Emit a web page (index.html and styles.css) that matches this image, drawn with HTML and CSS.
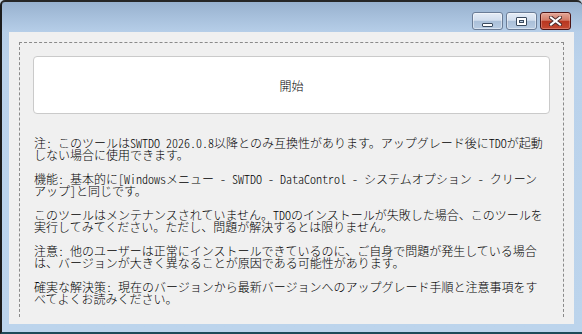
FILE: index.html
```html
<!DOCTYPE html>
<html lang="ja">
<head>
<meta charset="utf-8">
<link rel="stylesheet" href="styles.css">
</head>
<body>
<div class="window">
  <div class="titlebar">
    <div class="caption-btn cb-min"><span class="g-min"></span></div>
    <div class="caption-btn cb-max"><span class="g-max"></span></div>
    <div class="caption-btn cb-close">
      <svg width="13" height="10" viewBox="0 0 13 10">
        <path d="M2 1.5 L11 8.5 M11 1.5 L2 8.5" stroke="#4a2a2a" stroke-width="4" stroke-linecap="square" fill="none"/>
        <path d="M2 1.5 L11 8.5 M11 1.5 L2 8.5" stroke="#ffffff" stroke-width="2" stroke-linecap="square" fill="none"/>
      </svg>
    </div>
  </div>
  <div class="client">
    <div class="panel">
      <div class="start-btn">開始</div>
      <div class="notes">
        <p>注: このツールはSWTDO 2026.0.8以降とのみ互換性があります。アップグレード後にTDOが起動しない場合に使用できます。</p>
        <p>機能: 基本的に[Windowsメニュー - SWTDO - DataControl - システムオプション - クリーンアップ]と同じです。</p>
        <p>このツールはメンテナンスされていません。TDOのインストールが失敗した場合、このツールを実行してみてください。ただし、問題が解決するとは限りません。</p>
        <p>注意: 他のユーザーは正常にインストールできているのに、ご自身で問題が発生している場合は、バージョンが大きく異なることが原因である可能性があります。</p>
        <p>確実な解決策: 現在のバージョンから最新バージョンへのアップグレード手順と注意事項をすべてよくお読みください。</p>
      </div>
    </div>
  </div>
</div>
</body>
</html>
```

FILE: styles.css
```css
html, body {
  margin: 0;
  padding: 0;
}
body {
  width: 582px;
  height: 334px;
  overflow: hidden;
  background: #c9d6e2;
  font-family: "Noto Sans CJK JP", sans-serif;
}
.window {
  box-sizing: border-box;
  width: 582px;
  height: 334px;
  display: flex;
  flex-direction: column;
  border-left: 2px solid #1c1c1c;
  border-top: 2px solid #262626;
  border-bottom: 2px solid #1d4a58;
  border-top-left-radius: 5px;
  border-top-right-radius: 5px;
  background: linear-gradient(to bottom, #98b1ce 0px, #a6bfdb 14px, #b6cee8 30px, #bad2eb 60px, #bcd4ec 100%);
}
.titlebar {
  box-sizing: border-box;
  height: 30px;
  flex: none;
  display: flex;
  justify-content: flex-end;
  align-items: flex-start;
  gap: 3px;
  padding-top: 10px;
  padding-right: 11px;
}
.caption-btn {
  box-sizing: border-box;
  width: 31px;
  height: 18px;
  border: 1px solid #6a7c96;
  border-radius: 3px;
  display: flex;
  align-items: center;
  justify-content: center;
  background: linear-gradient(to bottom, #e4ecf6 0%, #d2deee 46%, #aabfd8 50%, #b8cce3 100%);
  box-shadow: inset 0 0 0 1px rgba(255, 255, 255, 0.45);
}
.cb-min {
  align-items: flex-end;
  padding-bottom: 2px;
}
.g-min {
  box-sizing: border-box;
  width: 11px;
  height: 4px;
  border: 1px solid #3a4a5e;
  border-radius: 1px;
  background: #ffffff;
}
.g-max {
  box-sizing: border-box;
  width: 11px;
  height: 9px;
  border: 1px solid #3a4a5e;
  border-radius: 1px;
  box-shadow: inset 0 0 0 2px #ffffff, inset 0 0 0 3px #3a4a5e;
  background: #b9cbe0;
}
.cb-close {
  border-color: #4c1414;
  background: linear-gradient(to bottom, #e2a798 0%, #d27a66 46%, #b8361f 50%, #c44a32 100%);
  box-shadow: inset 0 0 0 1px rgba(255, 200, 190, 0.35);
}
.cb-close svg {
  display: block;
}
.client {
  flex: 1;
  display: flex;
  flex-direction: column;
  margin: 0 8px 9px 7px;
  padding: 10px 10px 7px 10px;
  background: #f0f0f0;
}
.panel {
  flex: 1;
  display: flex;
  flex-direction: column;
  border: 1px dashed #8a8a8a;
  border-bottom: none;
  padding: 13px 13px 0 13px;
}
.start-btn {
  box-sizing: border-box;
  height: 58px;
  flex: none;
  display: flex;
  align-items: center;
  justify-content: center;
  background: #ffffff;
  border: 1px solid #cacaca;
  border-radius: 4px;
  font-size: 12px;
  font-weight: 300;
  color: #000000;
}
.notes {
  margin-top: 23px;
  padding-left: 1px;
  width: 513px;
  font-size: 12px;
  font-weight: 300;
  line-height: 12px;
  color: #000000;
  font-feature-settings: "hwid";
}
.notes p {
  margin: 0 0 12px 0;
}
```
